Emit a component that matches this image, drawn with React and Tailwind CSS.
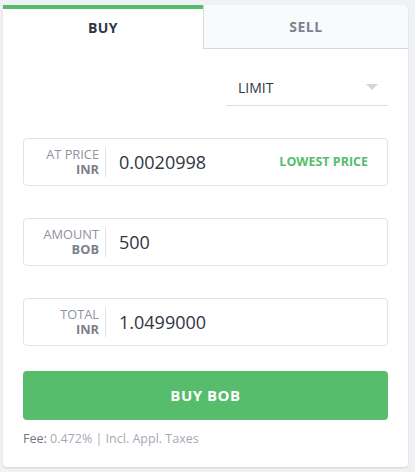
import { useState } from 'react';

/* ── Order form field ───────────────────────────────────── */
const Field = ({ label, unit, value, extra }) => (
  <div className="flex items-center h-[48px] w-full rounded-[4px] border border-[#e1e3e8] bg-white">
    <div className="w-[75px] text-right text-[12.8px] leading-[15.5px] text-[#8e939e]">
      {label}
      <br />
      <b className="font-bold text-[#7a7f8c]">{unit}</b>
    </div>
    <div className="w-px h-[30px] bg-[#dfe1e6] ml-[6px]" />
    <span className="ml-[13px] flex-1 text-[18px] text-[#2f3542]">{value}</span>
    {extra && (
      <span className="mr-[19px] text-[12.5px] font-bold text-[#55bd6c]">{extra}</span>
    )}
  </div>
);

export default function App() {
  const [tab, setTab] = useState('buy');

  return (
    <div
      className="w-[415px] h-[472px] bg-[#f0f1f5] pl-[3px] pt-[5px]"
      style={{ fontFamily: '"Open Sans", "Noto Sans", sans-serif' }}
    >
      <div className="w-[405px] h-[462px] bg-white rounded-b-[4px] rounded-tr-[5px] shadow-[0_1px_2px_rgba(0,0,0,0.12)]">

        {/* ── Tabs ── */}
        <div className="flex h-[44px]">
          <button
            onClick={() => setTab('buy')}
            className="w-[200px] border-t-4 border-[#55bd6c] pb-[3px] text-[14px] font-bold tracking-[0.5px] text-[#2f3542]"
          >
            BUY
          </button>
          <button
            onClick={() => setTab('sell')}
            className="flex-1 bg-[#f9fafc] border-l border-b border-[#d6d8dc] rounded-tr-[5px] text-[14px] font-bold tracking-[0.5px] text-[#7d8290]"
          >
            SELL
          </button>
        </div>

        <div className="px-[20px]">
          {/* ── Order type ── */}
          <div className="flex justify-end mt-[21px]">
            <div className="flex items-center justify-between w-[162px] h-[36px] pl-[12px] pr-[10px] border-b border-[#dcdde0]">
              <span className="text-[14px] text-[#2f3542]">LIMIT</span>
              <svg width="12" height="7" viewBox="0 0 12 7">
                <path d="M0 0 L12 0 L6 6 Z" fill="#d3d5d9" />
              </svg>
            </div>
          </div>

          {/* ── Inputs ── */}
          <div className="flex flex-col gap-[32px] mt-[32px]">
            <Field label="AT PRICE" unit="INR" value="0.0020998" extra="LOWEST PRICE" />
            <Field label="AMOUNT" unit="BOB" value="500" />
            <Field label="TOTAL" unit="INR" value="1.0499000" />
          </div>

          <button className="w-full h-[49px] mt-[25px] rounded-[4px] bg-[#55bd6c] text-white text-[15px] font-bold tracking-[0.5px]">
            BUY BOB
          </button>

          <p className="mt-[10px] text-[12.5px] text-[#a5aab6]">
            <span className="text-[#6f7480]">Fee:</span> 0.472% | Incl. Appl. Taxes
          </p>
        </div>
      </div>
    </div>
  );
}
